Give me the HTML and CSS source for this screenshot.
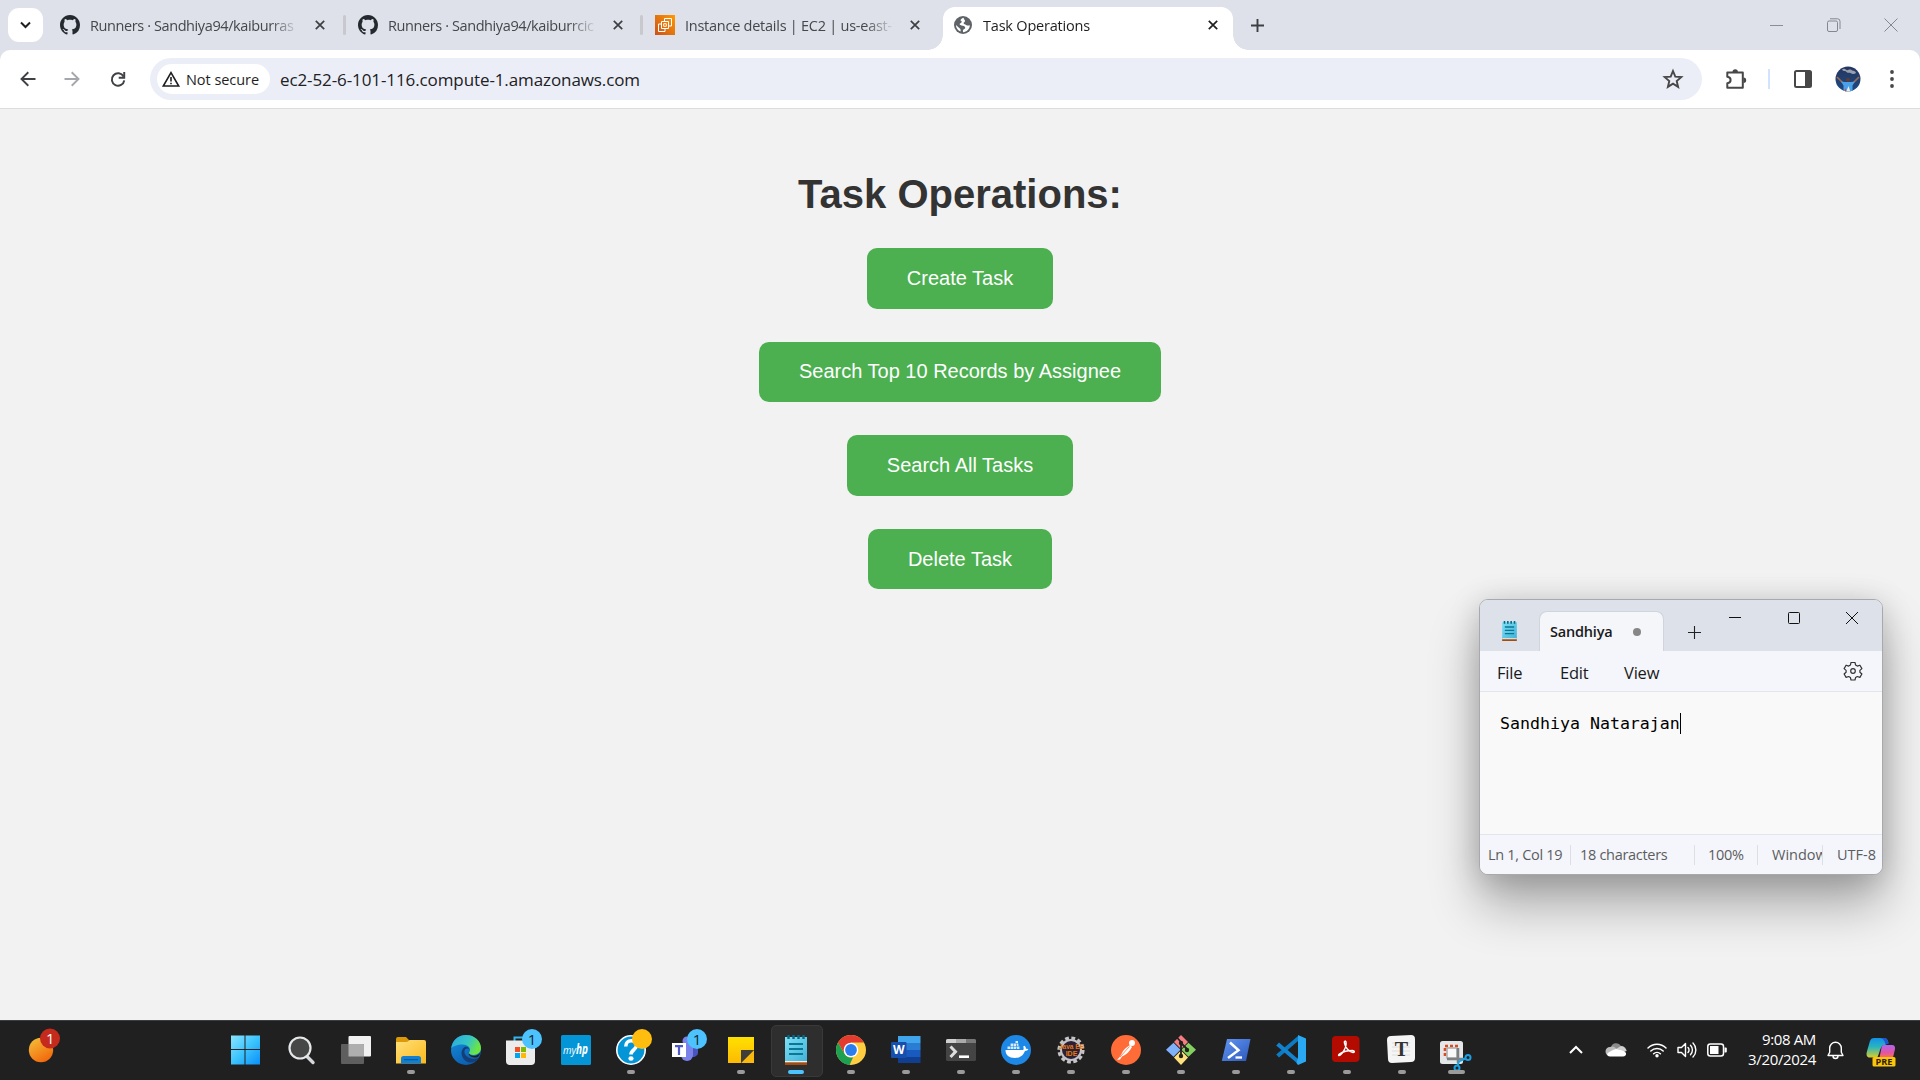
FILE: index.html
```html
<!DOCTYPE html>
<html lang="en">
<head>
<meta charset="utf-8">
<title>Task Operations</title>
<link rel="stylesheet" href="styles.css">
</head>
<body>
<svg class="defs" width="0" height="0">
  <defs>
    <symbol id="github" viewBox="0 0 16 16"><path d="M8 0C3.58 0 0 3.58 0 8c0 3.54 2.29 6.53 5.47 7.59.4.07.55-.17.55-.38 0-.19-.01-.82-.01-1.49-2.01.37-2.53-.49-2.69-.94-.09-.23-.48-.94-.82-1.13-.28-.15-.68-.52-.01-.53.63-.01 1.08.58 1.23.82.72 1.21 1.87.87 2.33.66.07-.52.28-.87.51-1.07-1.78-.2-3.64-.89-3.64-3.95 0-.87.31-1.59.82-2.15-.08-.2-.36-1.02.08-2.12 0 0 .67-.21 2.2.82.64-.18 1.32-.27 2-.27s1.36.09 2 .27c1.53-1.04 2.2-.82 2.2-.82.44 1.1.16 1.92.08 2.12.51.56.82 1.27.82 2.15 0 3.07-1.87 3.75-3.65 3.95.29.25.54.73.54 1.48 0 1.07-.01 1.93-.01 2.2 0 .21.15.46.55.38A8.01 8.01 0 0 0 16 8c0-4.42-3.58-8-8-8z" fill="#24292f"/></symbol>
    <symbol id="cross" viewBox="0 0 10 10"><path d="M.8.8l8.4 8.4M9.2.8L.8 9.2" stroke="currentColor" stroke-width="1.7" fill="none"/></symbol>
    <linearGradient id="gWin" x1="0" y1="0" x2="1" y2="1"><stop offset="0" stop-color="#8be4ff"/><stop offset=".5" stop-color="#3cc4fd"/><stop offset="1" stop-color="#0a8ff8"/></linearGradient>
    <linearGradient id="gOrange" x1="0" y1="0" x2=".6" y2="1"><stop offset="0" stop-color="#f5c33b"/><stop offset="1" stop-color="#f26a0d"/></linearGradient>
    <linearGradient id="gEc2" x1="0" y1="1" x2="1" y2="0"><stop offset="0" stop-color="#c8511b"/><stop offset="1" stop-color="#ff9900"/></linearGradient>
    <linearGradient id="gFolder" x1="0" y1="0" x2="1" y2="1"><stop offset="0" stop-color="#ffe07a"/><stop offset="1" stop-color="#fbb91c"/></linearGradient>
    <linearGradient id="gEdge" x1="0" y1="0" x2="1" y2=".4"><stop offset="0" stop-color="#2aa7e4"/><stop offset=".6" stop-color="#35c6c4"/><stop offset="1" stop-color="#6be544"/></linearGradient>
    <linearGradient id="gEdge2" x1="0" y1="0" x2=".6" y2="1"><stop offset="0" stop-color="#1490df"/><stop offset="1" stop-color="#0d5cae"/></linearGradient>
    <linearGradient id="gNote" x1="0" y1="0" x2="1" y2="1"><stop offset="0" stop-color="#7fe0f6"/><stop offset="1" stop-color="#3fb3d8"/></linearGradient>
    <linearGradient id="gSticky" x1="0" y1="0" x2="0" y2="1"><stop offset="0" stop-color="#ffe100"/><stop offset="1" stop-color="#fcba04"/></linearGradient>
    <linearGradient id="gPs" x1="0" y1="0" x2="1" y2="1"><stop offset="0" stop-color="#6296f5"/><stop offset="1" stop-color="#2c58b8"/></linearGradient>
    <linearGradient id="gCop" x1="0" y1="0" x2="0" y2="1"><stop offset="0" stop-color="#1590e8"/><stop offset=".45" stop-color="#27b5c0"/><stop offset="1" stop-color="#d9cc2c"/></linearGradient>
    <linearGradient id="gCop2" x1="0" y1="0" x2="0" y2="1"><stop offset="0" stop-color="#b065ef"/><stop offset=".6" stop-color="#e255a5"/><stop offset="1" stop-color="#f6754e"/></linearGradient>
    <linearGradient id="gSky" x1="0" y1="0" x2="0" y2="1"><stop offset="0" stop-color="#26355c"/><stop offset="1" stop-color="#1d4b85"/></linearGradient>
    <symbol id="notepad" viewBox="0 0 22 30">
      <path d="M0 25h22v5H0z" fill="#a14d12"/><path d="M0 25h22v2.300H0z" fill="#f4eee8"/>
      <path d="M0 2h22v24H0z" fill="url(#gNote)"/>
      <path d="M3.500 0v4M8.500 0v4M13.500 0v4M18.500 0v4" stroke="#076a87" stroke-width="2.400"/>
      <path d="M4 9h14M4 14h14M4 19h14" stroke="#0c7696" stroke-width="1.900"/>
    </symbol>
  </defs>
</svg>

<header class="browser">
  <div class="tabstrip">
    <div class="tab-search"><svg width="11" height="8" viewBox="0 0 11 8"><path d="M1 1.500l4.500 4.500L10 1.500" fill="none" stroke="#1f1f1f" stroke-width="2"/></svg></div>
    <div class="tab tab-first">
      <svg class="fav" width="20" height="20"><use href="#github"/></svg>
      <span class="tab-title"><span class="ui">Runners · Sandhiya94/kaiburras</span></span>
      <svg class="x" width="10" height="10"><use href="#cross"/></svg>
    </div>
    <div class="tab sep">
      <svg class="fav" width="20" height="20"><use href="#github"/></svg>
      <span class="tab-title"><span class="ui">Runners · Sandhiya94/kaiburrcic</span></span>
      <svg class="x" width="10" height="10"><use href="#cross"/></svg>
    </div>
    <div class="tab sep">
      <svg class="fav" width="20" height="20" viewBox="0 0 20 20"><path d="M0 0h20v20H0z" fill="url(#gEc2)"/><g fill="none" stroke="#fff" stroke-width="1"><path d="M9.500 6V3.500h7V11H14M6 9H3.500v7.500H10V14"/><path d="M6.500 6.500h7v7h-7z"/><path d="M8.700 8.700h2.600v2.600H8.700z"/></g></svg>
      <span class="tab-title wide"><span class="ui">Instance details | EC2 | us-east-1</span></span>
      <svg class="x" width="10" height="10"><use href="#cross"/></svg>
    </div>
    <div class="tab active">
      <svg class="fav" width="18" height="18" viewBox="1 1 18 18"><circle cx="10" cy="10" r="9" fill="#5f6368"/><path d="M10.500 2.800c-2 .6-2.700 1.500-3 2.700 1.500.6 1.700 1.700.4 2.400-1.500.7-1.700 1.300-.5 2.200 1.300.9 3.600.3 4.600 1.800.7 1.200-.2 2-1.500 2.500-.8.300-.6 1.500-.4 2.800 3.600-.3 6.700-3.200 6.700-7-1.300.5-2.500.6-3.700-.3-1-.8-2.300-.6-2.500-1.600-.1-1 1.300-1 1.500-2.200.1-.9-1.200-1.600-1.600-3.300zM2.900 10c.2 3 2 5.500 4.600 6.600.4-1.500.2-2.700-1.200-3.600C5 12.200 4.200 11 2.900 10z" fill="#fff"/></svg>
      <span class="tab-title"><span class="ui">Task Operations</span></span>
      <svg class="x" width="10" height="10"><use href="#cross"/></svg>
    </div>
    <svg class="newtab" width="13" height="13" viewBox="0 0 13 13"><path d="M6.500 0v13M0 6.500h13" stroke="#3c4043" stroke-width="1.900"/></svg>
    <div class="wincontrols">
      <svg width="14" height="14" viewBox="0 0 14 14"><path d="M0 7.500h13" stroke="#8a8d92"/></svg>
      <svg width="14" height="14" viewBox="0 0 14 14"><g fill="none" stroke="#84878b"><rect x=".5" y="3" width="10" height="10.500" rx="1.500"/><path d="M3 .8h7.500a2.500 2.500 0 0 1 2.500 2.500V11"/></g></svg>
      <svg width="14" height="14" viewBox="0 0 14 14"><path d="M.5.500l13 13M13.500.500l-13 13" stroke="#84878b" fill="none"/></svg>
    </div>
  </div>
  <div class="toolbar">
    <svg class="nav" width="16" height="16" viewBox="0 0 16 16"><path d="M15.500 8H1.800M8.300 1.300L1.500 8l6.800 6.700" fill="none" stroke="#3f4145" stroke-width="1.900"/></svg>
    <svg class="nav" width="16" height="16" viewBox="0 0 16 16"><path d="M.5 8h13.700M7.700 1.300L14.500 8l-6.800 6.700" fill="none" stroke="#a6a7aa" stroke-width="1.900"/></svg>
    <svg class="nav reload" width="16" height="16" viewBox="0 0 18 18"><path d="M15.200 6.200A7 7 0 1 0 16 10.500" fill="none" stroke="#3f4145" stroke-width="2.200"/><path d="M16 1v6.500H9.800" fill="none" stroke="#3f4145" stroke-width="2.200"/></svg>
    <div class="omnibox">
      <div class="chip">
        <svg width="18" height="16" viewBox="0 0 18 16"><path d="M9 1.700L16.700 15H1.300z" fill="none" stroke="#1f1f1f" stroke-width="1.600"/><path d="M9 6v4.500M9 11.700v1.600" stroke="#1f1f1f" stroke-width="1.600"/></svg>
        <span class="ui">Not secure</span>
      </div>
      <span class="ui url">ec2-52-6-101-116.compute-1.amazonaws.com</span>
      <svg class="star" width="20" height="20" viewBox="0 0 20 20"><path d="M10 2l2.300 5.600 6 .5-4.600 3.900 1.400 5.900-5.100-3.200-5.100 3.200L6.300 12 1.700 8.100l6-.5z" fill="none" stroke="#474747" stroke-width="1.900"/></svg>
    </div>
    <svg class="puzzle" width="22" height="22" viewBox="0 0 22 22"><path d="M2.300 4.500h15.500v15.300H2.300v-4.600c4.400-.4 4.400-6 0-6.400z" fill="none" stroke="#474747" stroke-width="2" stroke-linejoin="round"/><path d="M7.500 4a2.700 2.700 0 0 1 5.400 0zM18.500 9.500a2.700 2.700 0 0 1 0 5.400z" fill="#474747"/></svg>
    <i class="divider"></i>
    <svg class="panel" width="18" height="18" viewBox="0 0 18 18"><rect x="1" y="1" width="16" height="16" rx="1.500" fill="none" stroke="#474747" stroke-width="2"/><path d="M11 1h6v16h-6z" fill="#474747"/></svg>
    <svg class="avatar" width="26" height="26" viewBox="0 0 26 26"><clipPath id="av"><circle cx="13" cy="13" r="12.500"/></clipPath><g clip-path="url(#av)"><path d="M0 0h26v26H0z" fill="url(#gSky)"/><path d="M7 3.500c2-1.500 3-.5 4.500.5s3-1.500 5 0 3.500 0 4.500 3c-2 1.500-4 1-5.500 0s-3 .5-4-1-3 0-4.500-2.500z" fill="#98a0b0"/><path d="M2 11l6 6M24 11l-6 6" fill="none" stroke="#9a6a52" stroke-width="1.700"/><path d="M6 15.500l4 .5h6l4-.5-2.500 4V26h-9v-6.500z" fill="#4ba0ea"/><circle cx="13" cy="14" r="2" fill="#5d3d35"/><path d="M11 26l2.500-6 2 6z" fill="#f0ead8"/><path d="M10.500 22l1 4h-2z" fill="#d34136"/></g></svg>
    <svg class="dots" width="4" height="18" viewBox="0 0 4 18"><g fill="#474747"><circle cx="2" cy="2" r="1.900"/><circle cx="2" cy="9" r="1.900"/><circle cx="2" cy="16" r="1.900"/></g></svg>
  </div>
</header>

<main class="page">
  <h1>Task Operations:</h1>
  <button class="btn">Create Task</button>
  <button class="btn">Search Top 10 Records by Assignee</button>
  <button class="btn">Search All Tasks</button>
  <button class="btn">Delete Task</button>
</main>

<footer class="taskbar">
  <div class="weather">
    <svg width="34" height="36" viewBox="0 0 34 36"><circle cx="14" cy="22" r="12.200" fill="url(#gOrange)"/><circle cx="23" cy="10.500" r="10" fill="#c42b1c"/><text x="23.300" y="16" class="badge-text" fill="#fff">1</text></svg>
  </div>
  <div class="apps">
    <div class="app"><svg width="30" height="30" viewBox="1 0.500 30 30"><path d="M1 1h13.500v13.500H1zM15.500 1H30v13.500H15.500zM1 15.500h13.500V30H1zM15.500 15.500H30V30H15.500z" fill="url(#gWin)"/></svg></div>
    <div class="app"><svg width="30" height="30" viewBox="0 0 30 30"><path d="M20.500 21l6.500 6.500" stroke="#d5d7da" stroke-width="3.400" stroke-linecap="round"/><circle cx="14" cy="13" r="10.500" fill="#474747" stroke="#e6e7e9" stroke-width="2.200"/></svg></div>
    <div class="app"><svg width="30" height="30" viewBox="0 0 30 30"><rect x="7.500" y="1" width="22.500" height="20.500" rx="1" fill="#f1f1f1"/><rect x="0" y="9" width="23" height="20" rx="1" fill="#5e5e5e"/><path d="M7.500 9H22a1 1 0 0 1 1 1v11.500H7.500z" fill="#aeaeae"/></svg></div>
    <div class="app run"><svg width="30" height="30" viewBox="0 0 30 30"><path d="M0 4a2 2 0 0 1 2-2h8l3 3h7v6H0z" fill="#dc9a0b"/><path d="M0 7h11l3-2h14a2 2 0 0 1 2 2v21.500H0z" fill="url(#gFolder)"/><path d="M5 28.500V23.500a2.500 2.500 0 0 1 2.500-2.500h15a2.500 2.500 0 0 1 2.500 2.500v5z" fill="#1180d2"/><path d="M8 24.700h14" stroke="#08528f"/></svg></div>
    <div class="app"><svg width="30" height="30" viewBox="0 0 30 30"><circle cx="15" cy="15" r="15" fill="url(#gEdge2)"/><path d="M.3 13C1.500 5 7.500 0 15 0c9 0 15 6.500 15 13 0 4-3 7-7.500 7-3 0-5-1-4.500-2.300 3-4-1-8.200-6.500-8.200C6 9.500 2 11.500.3 13z" fill="url(#gEdge)"/><path d="M12 13.500c-4 5 .5 13.500 7 14 3.500.2 6.500-1.500 9-5-3 2-8.500 2-12-1-2.600-2.200-3.400-5.300-1.500-7.500 1-.9 3-.8 4 1-.8-3-4-4.500-6.500-1.500z" fill="#123f78"/><path d="M18.500 18.500c.5 1.500 2.500 3 6 2.300 2-.5 4-1.500 5-3.500-1 3-2 4.500-3.500 5-3.500.8-7-.5-8.200-2.800z" fill="#202020"/></svg></div>
    <div class="app"><svg width="30" height="30" viewBox="0 0 30 30"><path d="M8.500 6V2.500h12V6" fill="none" stroke="#33b5ec" stroke-width="2"/><path d="M0 5.500h29V26a4 4 0 0 1-4 4H4a4 4 0 0 1-4-4z" fill="#ececec"/><path d="M9 12h5v5H9z" fill="#f25022"/><path d="M15 12h5v5h-5z" fill="#7fba00"/><path d="M9 18h5v5H9z" fill="#00a4ef"/><path d="M15 18h5v5h-5z" fill="#ffb900"/></svg><b class="badge">1</b></div>
    <div class="app"><svg width="30" height="30" viewBox="0 0 30 30"><rect width="30" height="30" rx="1.500" fill="#0495d6"/><text x="2" y="18.500" class="my" textLength="13" lengthAdjust="spacingAndGlyphs">my</text><text x="15" y="19" class="hp" textLength="12" lengthAdjust="spacingAndGlyphs">hp</text></svg></div>
    <div class="app run"><svg width="30" height="30" viewBox="0 0 30 30"><circle cx="15" cy="15" r="14.200" fill="#0495d6" stroke="#fff" stroke-width="1.600"/><path d="M9.800 11.500C9.500 4 20.500 4 20.500 10.500c0 4.500-5.500 4-5.500 9" fill="none" stroke="#fff" stroke-width="3.600"/><ellipse cx="15" cy="23.500" rx="2.600" ry="2.200" fill="#fff"/></svg><b class="badge yellow"></b></div>
    <div class="app"><svg width="30" height="30" viewBox="0 0 30 30"><circle cx="16" cy="6" r="4.500" fill="#7b83eb"/><path d="M19 9h8v9a5 5 0 0 1-8 3z" fill="#4b53bc"/><path d="M10 9h12v11a6 6 0 0 1-12 0z" fill="#7b83eb"/><path d="M1 8h14v14H1z" fill="#fff"/><path d="M4 11.200h8M8 11v9" stroke="#5059c9" stroke-width="2.200"/></svg><b class="badge">1</b></div>
    <div class="app run"><svg width="30" height="30" viewBox="0 0 30 30"><path d="M2 2h26v13L15 28H2z" fill="url(#gSticky)"/><path d="M28 15v13H15z" fill="#f9b90d"/><path d="M15 15h13L15 28z" fill="#3f3e3b"/></svg></div>
    <div class="app current"><svg width="22" height="30"><use href="#notepad"/></svg></div>
    <div class="app run"><svg width="30" height="30" viewBox="0 0 30 30"><circle cx="15" cy="15" r="15" fill="#ffcd40"/><path d="M2 7.500A15 15 0 0 1 28 7.500H15L8.500 18.700z" fill="#e33b2e"/><path d="M2 7.500l6.500 11.200c2 3.500 5.500 4.300 8.500 3.700L13.600 30A15 15 0 0 1 2 7.500z" fill="#1da050"/><circle cx="15" cy="15" r="7.300" fill="#fff"/><circle cx="15" cy="15" r="5.900" fill="#2b7cec"/></svg></div>
    <div class="app run"><svg width="30" height="30" viewBox="0 0 30 30"><path d="M7 1h22.500v7H7z" fill="#41a5ee"/><path d="M7 8h22.500v7H7z" fill="#2b7cd3"/><path d="M7 15h22.500v7H7z" fill="#185abd"/><path d="M7 22h22.500v6H7z" fill="#103f91"/><rect y="7" width="15.500" height="16" rx="1" fill="#174fae"/><text x="7.700" y="19.300" class="word">W</text></svg></div>
    <div class="app run"><svg width="30" height="30" viewBox="0 0 30 30"><rect y="4" width="30" height="22" rx="1.500" fill="#444"/><path d="M0 8V5.500A1.500 1.500 0 0 1 1.500 4H10v4z" fill="#d0d0d0"/><path d="M10 4h10v4H10z" fill="#aaa"/><path d="M20 4h8.500A1.500 1.500 0 0 1 30 5.500V8H20z" fill="#787878"/><path d="M4.500 11.500l5 5.200-5 5.300" fill="none" stroke="#ddd" stroke-width="3"/><path d="M13 21.700h10" stroke="#fff" stroke-width="2.600"/></svg></div>
    <div class="app run"><svg width="30" height="30" viewBox="0 0 30 30"><circle cx="15" cy="15" r="15" fill="#1d88e5"/><path d="M4.500 15h17.700c.7-1 .5-2.500 0-3.500l1.300-.8c1 .8 1.500 2 1.300 3 1 0 1.800.1 2.500.5-.6 1.200-1.700 1.700-3.300 1.700-2 5-5.500 7-10 7-6 0-9.500-2.500-9.500-7.900z" fill="#fff"/><path d="M6.500 11.500h2.600V14H6.500zM9.600 11.500h2.600V14H9.600zM12.700 11.500h2.600V14h-2.600zM15.800 11.500h2.600V14h-2.600zM9.600 8.600h2.600v2.400H9.600zM12.700 8.600h2.600v2.400h-2.600zM15.800 8.600h1.600v2.400h-1.600zM14.500 6h2.500v2.100h-2.500z" fill="#d9ecfb"/></svg></div>
    <div class="app run"><svg width="30" height="30" viewBox="0 0 30 30"><circle cx="15" cy="15" r="12" fill="#2a2038" stroke="#c4c4c4" stroke-width="3.200" stroke-dasharray="3.800 2.483"/><circle cx="15" cy="15" r="10" fill="#2a2038" stroke="#c4c4c4" stroke-width="2"/><text x="15.500" y="14" class="java" textLength="25" lengthAdjust="spacingAndGlyphs">Java EE</text><text x="15.500" y="20.700" class="java">IDE</text></svg></div>
    <div class="app run"><svg width="30" height="30" viewBox="0 0 30 30"><circle cx="15" cy="15" r="15" fill="#ff6c37"/><circle cx="21" cy="8" r="3" fill="#fff"/><path d="M19 10l2 2c-2.500 5-6 7.500-10 9.500l-2 3-3 .5c2-2 3-3.500 4.500-6 1.500-4 4.500-6.500 8.500-9z" fill="#fff"/><path d="M18.500 11.500L9 22" stroke="#ff6c37" stroke-width=".8"/></svg></div>
    <div class="app run"><svg width="30" height="30" viewBox="0 0 30 30"><path d="M15 0l7 7-7 7-7-7z" fill="#f77c80"/><path d="M7.500 7.700l7 7-7 7L0 14.700z" fill="#7fb2fb"/><path d="M22.500 7.700l7.500 7-7.500 7-7-7z" fill="#85cf5f"/><path d="M15 15.500l7 7-7 7.500-7-7.500z" fill="#ffe07c"/><path d="M10.500 2l4.500 5v14M15 8l6.500 6.500" fill="none" stroke="#202020" stroke-width="1.800"/><g fill="#202020"><circle cx="15" cy="8" r="2.200"/><circle cx="21" cy="15" r="2.200"/><circle cx="15" cy="21" r="2.200"/></g></svg></div>
    <div class="app run"><svg width="30" height="30" viewBox="0 0 30 30"><path d="M6 4h23.500L25 26H.8z" fill="url(#gPs)"/><path d="M9 7.500l8.500 7.700L7 23" fill="none" stroke="#fff" stroke-width="2.500"/><path d="M14.500 22.500H21" stroke="#fff" stroke-width="2.300"/></svg></div>
    <div class="app run"><svg width="30" height="30" viewBox="0 0 30 30"><path d="M22 6L3 22.500l-2.800-3L22 1z" fill="#0d7bc4"/><path d="M22 24L3 7.500l-2.800 3L22 29z" fill="#1383cf"/><path d="M22 0l8 3.500v23L22 30l-1.500-2L22 22z" fill="#2aa8f2"/></svg></div>
    <div class="app run nudge"><svg width="28" height="28" viewBox="0 0 28 28"><rect y="1" width="27.500" height="26" rx="4" fill="#b30b00"/><path d="M7 20.500c3-.5 8-8.500 7-13.500-.3-1.500-2-1.200-1.600.8C13.300 12.500 17 17 21 17.500c2 .2 1.800-2-.5-2-4 0-9.500 1.200-12.500 3-2 1.300-1.500 2.200-1 2z" fill="none" stroke="#fff" stroke-width="1.400"/></svg></div>
    <div class="app run nudge"><svg width="28" height="28" viewBox="0 0 28 28"><path d="M4 1l20-1q4 0 4 4v19q0 4-4 4L5 28q-4 0-4-4L0 5q0-4 4-4z" fill="#f5f5f5"/><path d="M5 8h18M5 12h18M5 16h18M5 20h18" stroke="#dedede"/><text x="14.300" y="20.500" class="typora">T</text></svg></div>
    <div class="app run snip"><svg width="32" height="32" viewBox="0 0 32 32"><rect x="1" y="7" width="23" height="23" rx="2.500" fill="#e5e6e8"/><path d="M6 22V12h13" fill="none" stroke="#dc4a1e" stroke-width="2.600" stroke-dasharray="3 2"/><path d="M8 14h10v10H8z" fill="#f8f8f8" stroke="#aaa" stroke-width="1.500"/><path d="M19 14v15M8 25h17" stroke="#7d8083" stroke-width="2.500"/><circle cx="29" cy="23.500" r="2.500" fill="none" stroke="#1ba0e2" stroke-width="2"/><circle cx="18" cy="34" r="2.500" fill="none" stroke="#1ba0e2" stroke-width="2"/><path d="M20.500 27l6-2.500M20 27l-1.500 5" stroke="#1ba0e2" stroke-width="2"/></svg></div>
  </div>
  <div class="tray">
    <svg class="t-chev" width="14" height="9" viewBox="0 0 14 9"><path d="M1 8l6-6 6 6" fill="none" stroke="#fff" stroke-width="2"/></svg>
    <svg class="t-cloud" width="21" height="15" viewBox="0 0 21 15"><path d="M5 5a5.500 5.500 0 0 1 10-1l2 4-8 4z" fill="#8b8b8b"/><path d="M4 5c3-1.500 5 0 7 2.500L4 14A4.500 4.500 0 0 1 4 5z" fill="#bdbdbd"/><path d="M10 7l5-3c3 0 5 2 5.700 5l-6 2z" fill="#cfcfcf"/><path d="M1 12c2-2.500 6-4 9-5 3 1 8 1 10 4 .5 2-1 3.500-3 3.500H4A3 3 0 0 1 1 12z" fill="#fff"/></svg>
    <svg class="t-wifi" width="20" height="16" viewBox="0 0 20 16"><g fill="none" stroke="#fff" stroke-width="1.500" stroke-linecap="round"><path d="M1 6a12.700 12.700 0 0 1 18 0M3.800 9a8.800 8.800 0 0 1 12.400 0M6.600 11.800a4.900 4.900 0 0 1 6.800 0"/></g><circle cx="10" cy="13.700" r="1.700" fill="#fff"/></svg>
    <svg class="t-vol" width="20" height="16" viewBox="0 0 20 16"><g fill="none" stroke="#fff" stroke-width="1.400" stroke-linecap="round" stroke-linejoin="round"><path d="M1 5.500h3.500L8.500 1.500v13L4.500 10.500H1z"/><path d="M11 5.500a3.500 3.500 0 0 1 0 5M13.500 3.300a6.700 6.700 0 0 1 0 9.400M16 1a10 10 0 0 1 0 14"/></g></svg>
    <svg class="t-bat" width="20" height="14" viewBox="0 0 20 14"><rect x=".8" y="1" width="15.700" height="12" rx="2.500" fill="none" stroke="#fff" stroke-width="1.500"/><path d="M3 3h8.500v8H3z" fill="#fff"/><path d="M17.500 4.500h1.300q1 0 1 1v3q0 1-1 1h-1.300z" fill="#fff"/></svg>
    <div class="clock ui"><span>9:08 AM</span><span>3/20/2024</span></div>
    <svg class="t-bell" width="17" height="18" viewBox="0 0 17 18"><path d="M1 14.500h15l-1.700-3.300V7a5.800 5.800 0 0 0-11.600 0v4.200zM6 15a2.500 2.500 0 0 0 5 0" fill="none" stroke="#fff" stroke-width="1.400" stroke-linejoin="round"/></svg>
    <svg class="t-cop" width="30" height="30" viewBox="0 0 30 30"><path d="M8 1h10c3 0 4 2 4.500 5l-3.500 2c-4-1-5 6-7 11-.5 1-1 1.500-2 1.500H3.500C1 20.500 0 18 .8 15l3-10.500C4.500 2 6 1 8 1z" fill="url(#gCop)"/><path d="M14 1h4.500c2.500 0 3.500 2.500 4 6h-3c-1-4-3-6-5.500-6z" fill="#2354cf"/><path d="M17.500 8H26c2.500 0 3.500 2 2.900 4.500L27 20.500H13.500l2-10c.3-1.500 1-2.500 2-2.500z" fill="url(#gCop2)"/><rect x="6.500" y="20" width="23" height="9.500" rx="1.500" fill="#fcc50b"/><text x="18" y="27.800" class="pre" textLength="17" lengthAdjust="spacingAndGlyphs">PRE</text></svg>
  </div>
</footer>

<section class="notepad">
  <div class="np-title">
    <svg class="np-icon" width="15" height="20" preserveAspectRatio="none"><use href="#notepad"/></svg>
    <div class="np-tab"><span class="ui">Sandhiya</span><i></i></div>
    <svg class="np-plus" width="13" height="13" viewBox="0 0 13 13"><path d="M6.500 0v13M0 6.500h13" stroke="#222" stroke-width="1.100"/></svg>
    <div class="np-controls">
      <svg width="12" height="12" viewBox="0 0 12 12"><path d="M0 5.500h12" stroke="#111"/></svg>
      <svg width="12" height="12" viewBox="0 0 12 12"><rect x=".5" y=".5" width="11" height="11" rx="1" fill="none" stroke="#111"/></svg>
      <svg width="12" height="12" viewBox="0 0 12 12"><path d="M0 0l12 12M12 0L0 12" stroke="#111"/></svg>
    </div>
  </div>
  <div class="np-menu ui">
    <span class="m1">File</span><span class="m2">Edit</span><span class="m3">View</span>
    <svg width="20" height="20" viewBox="0 0 20 20"><path d="M8 1.500h4l.6 2.600 1.700 1 2.600-.9 2 3.400-2 1.800v1.800l2 1.800-2 3.400-2.600-.9-1.700 1-.6 2.500H8l-.6-2.500-1.700-1-2.600.9-2-3.400 2-1.800V9.400l-2-1.800 2-3.400 2.600.9 1.700-1z" fill="none" stroke="#333" stroke-width="1.200" stroke-linejoin="round"/><circle cx="10" cy="10" r="2.300" fill="none" stroke="#333" stroke-width="1.200"/></svg>
  </div>
  <div class="np-text"><span>Sandhiya Natarajan</span></div>
  <div class="np-status ui">
    <div class="s1"><span>Ln 1, Col 19</span></div><div class="s2"><span>18 characters</span></div><div class="s3"><span>100%</span></div><div class="s4"><span>Window</span></div><div class="s5"><span>UTF-8</span></div>
  </div>
</section>
</body>
</html>
```
FILE: styles.css
```css
* { box-sizing: border-box; }
html, body { height: 100%; }
body { margin: 0; display: flex; flex-direction: column; overflow: hidden; background: #f2f2f2; font-family: "Liberation Sans", Arial, sans-serif; position: relative; }
svg { display: block; flex: none; overflow: visible; }
.defs { position: absolute; }
.ui { font-family: "Open Sans", "Noto Sans", sans-serif; font-stretch: 90%; white-space: nowrap; }

/* Browser frame */
.browser { height: 109px; flex: none; background: #dee1e9; border-bottom: 1px solid #dcdcdc; }
.tabstrip { height: 50px; display: flex; align-items: center; padding-left: 8px; }
.tab-search { width: 35px; height: 34px; border-radius: 11px; background: #fff; display: flex; align-items: center; justify-content: center; }
.tab { width: 297px; height: 50px; display: flex; align-items: center; padding-left: 15px; font-size: 14.5px; color: #44474b; position: relative; }
.tab-first { width: 300px; padding-left: 17px; }
.tab .fav { margin-right: 10px; }
.tab-title { width: 210px; overflow: hidden; letter-spacing: -.4px; -webkit-mask-image: linear-gradient(90deg, #000 180px, transparent 210px); mask-image: linear-gradient(90deg, #000 180px, transparent 210px); }
.tab-title.wide { letter-spacing: -.25px; }
.tab .x { margin-left: 15px; color: #3c4043; }
.tab.sep::before { content: ""; position: absolute; left: 0; top: 15px; width: 3px; height: 20px; border-radius: 2px; background: #c8c9cc; }
.tab.active { width: 290px; height: 43px; align-self: flex-end; padding: 0 0 7px 11px; margin-left: 6px; background: #fff; border-radius: 12px 12px 0 0; color: #1f1f1f; }
.tab.active .fav { margin-right: 11px; }
.tab.active .tab-title { letter-spacing: -.2px; }
.tab.active .x { color: #1f1f1f; }
.tab.active::before, .tab.active::after { content: ""; position: absolute; bottom: 0; width: 15px; height: 15px; }
.tab.active::before { left: -15px; background: radial-gradient(circle at 0 0, transparent 14.5px, #fff 15px); }
.tab.active::after { right: -15px; background: radial-gradient(circle at 100% 0, transparent 14.5px, #fff 15px); }
.newtab { margin-left: 18px; }
.wincontrols { margin-left: auto; display: flex; gap: 43px; padding-right: 22px; }
.toolbar { height: 58px; display: flex; align-items: center; background: #fff; border-radius: 10px 10px 0 0; padding-left: 20px; }
.nav { margin-right: 28px; }
.nav.reload { margin: 0 24px 0 2px; }
.omnibox { width: 1552px; height: 42px; border-radius: 21px; background: #eceef7; display: flex; align-items: center; padding: 0 19px 0 7px; }
.chip { width: 113px; height: 30px; background: #fff; border-radius: 15px; display: flex; align-items: center; gap: 6px; padding-left: 5px; font-size: 14.5px; color: #1f1f1f; letter-spacing: -.05px; }
.url { margin-left: 10px; font-size: 17px; letter-spacing: -.1px; color: #202124; }
.star { margin-left: auto; }
.puzzle { margin-left: 23px; }
.divider { width: 2px; height: 20px; background: #d3e3fd; margin-left: 21px; }
.panel { margin-left: 24px; }
.avatar { margin-left: 23px; }
.dots { margin-left: 29px; }

/* Page */
.page { flex: 1; display: flex; flex-direction: column; align-items: center; padding-top: 62px; }
h1 { margin: 0 0 31px; font-size: 40px; line-height: 46px; color: #333; }
.btn { height: 60.600px; margin-bottom: 33px; border: 0; border-radius: 10px; padding: 0 40px; font: 20px "Liberation Sans", Arial, sans-serif; color: #fff; background: #4caf50; }

/* Taskbar */
.taskbar { height: 60px; flex: none; background: #202020; border-top: 1px solid #3b3e40; display: flex; color: #fff; }
.weather { width: 218px; padding: 7px 0 0 27px; }
.badge-text { font: 15px "Open Sans", sans-serif; text-anchor: middle; }
.apps { display: flex; padding-right: 86px; }
.app { width: 55px; height: 59px; display: flex; align-items: center; justify-content: center; position: relative; padding-bottom: 2px; }
.app.run::after { content: ""; position: absolute; left: 24px; bottom: 6px; width: 8px; height: 4px; border-radius: 2px; background: #9a9a9a; }
.app.nudge svg { margin: -2px 0 0 1px; }
.app.nudge.run::after { left: 25px; }
.app.snip.run::after { left: 20px; width: 17px; }
.app.snip svg { margin: 0 0 0 -2px; }
.badge { position: absolute; left: 29px; top: 8px; width: 20px; height: 20px; border-radius: 10px; background: #4cc2ff; color: #16242d; font: 15px/20px "Open Sans", sans-serif; text-align: center; }
.badge.yellow { background: #ffbd10; }
.app.current::before { content: ""; position: absolute; left: 3px; top: 4px; width: 50px; height: 50px; border-radius: 5px; background: #2e2e2e; border: 1px solid #393939; }
.app.current::after { content: ""; position: absolute; left: 20px; bottom: 6px; width: 16px; height: 4px; border-radius: 2px; background: #4cc2ff; }
.app.current svg { position: relative; }
.my { font: italic 10px "Open Sans", sans-serif; fill: #fff; }
.hp { font: italic bold 14px "Open Sans", sans-serif; fill: #fff; }
.word { font: bold 12px "Open Sans", sans-serif; fill: #fff; text-anchor: middle; }
.java { font: bold 7px "Liberation Sans", sans-serif; fill: #e67a10; text-anchor: middle; }
.typora { font: bold 20px "Liberation Serif", serif; fill: #333; text-anchor: middle; }
.pre { font: bold 8px "Open Sans", sans-serif; fill: #2a2208; text-anchor: middle; }
.tray { display: flex; align-items: center; padding-bottom: 2px; }
.t-cloud { margin-left: 23px; }
.t-wifi { margin-left: 20px; }
.t-vol { margin-left: 10px; }
.t-bat { margin-left: 10px; }
.clock { width: 89px; margin-top: -2px; display: flex; flex-direction: column; align-items: flex-end; font-size: 15px; line-height: 20px; letter-spacing: -.35px; }
.t-bell { margin-left: 11px; }
.t-cop { margin: 4px 0 0 22px; }

/* Floating Notepad window */
.notepad { position: absolute; left: 1479px; top: 599px; width: 404px; height: 276px; border: 1px solid #a7a9ad; border-radius: 9px; overflow: hidden; display: flex; flex-direction: column; background: #f9f9f9; box-shadow: 0 30px 50px rgba(0,0,0,.3), 0 3px 30px rgba(0,0,0,.17); }
.np-title { height: 51px; flex: none; display: flex; background: #dce1ea; }
.np-icon { margin: 21px 0 0 22px; }
.np-tab { width: 125px; height: 40px; margin: 11px 0 0 22px; display: flex; align-items: center; border: 1px solid #cfd4dd; border-bottom: 0; border-radius: 8px 8px 0 0; background: #f4f6fa; padding-left: 10px; font-size: 14.5px; font-weight: 600; letter-spacing: -.2px; color: #1a1a1a; }
.np-tab span { width: 83px; }
.np-tab i { width: 8px; height: 8px; border-radius: 4px; background: #868686; }
.np-plus { margin: 26px 0 0 24px; }
.np-controls { display: flex; gap: 46.500px; margin: 12px 0 0 28px; }
.np-menu { height: 41px; flex: none; display: flex; align-items: center; background: #f4f6fb; border-bottom: 1px solid #e3e5ea; padding: 2px 19px 0 17px; font-size: 16.500px; color: #1a1a1a; letter-spacing: -.2px; }
.m1 { width: 63px; } .m2 { width: 64px; }
.np-menu svg { margin: -3px 0 0 auto; }
.np-text { flex: 1; padding: 21px 20px; font: 16.600px/21px "DejaVu Sans Mono", monospace; color: #000; }
.np-text span { display: inline-block; border-right: 1px solid #000; white-space: nowrap; }
.np-status { height: 40px; flex: none; display: flex; align-items: center; background: #f4f6fb; border-top: 1px solid #e3e5ea; font-size: 14.500px; color: #5c5d60; letter-spacing: -.3px; }
.np-status div { flex: none; height: 20px; line-height: 20px; overflow: hidden; border-right: 1px solid #dddfe4; }
.s1 { width: 91px; padding-left: 8px; }
.s2 { width: 124px; padding-left: 9px; }
.s3 { width: 63px; padding-left: 13px; }
.s4 { width: 65px; padding-left: 14px; letter-spacing: 0; }
.np-status .s5 { width: 58px; padding-left: 14px; border: 0; letter-spacing: 0; }
```
